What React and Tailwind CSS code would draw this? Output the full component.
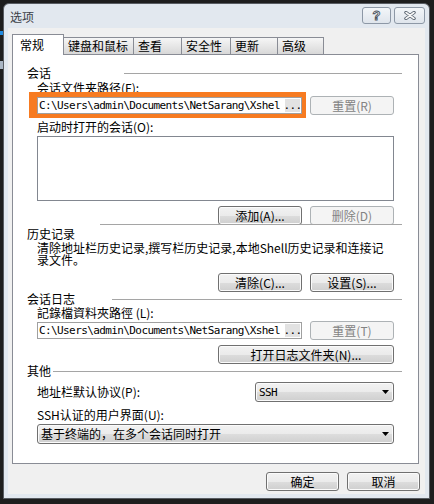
import React from "react";

const btnFace =
  "border-[#707070] bg-[linear-gradient(#f2f2f2,#ebebeb_50%,#dddddd_50%,#cfcfcf)] shadow-[inset_0_0_0_1px_#fbfbfb] text-black";
const btnOff = "border-[#adb2b5] bg-[#f4f4f4] text-[#838383]";
const mono = "font-['DejaVu_Sans_Mono',monospace] text-[11px] tracking-[-0.6px]";

const Btn = ({ children, w = "w-[84px]", disabled }) => (
  <div
    className={`${w} h-[19px] shrink-0 flex items-center justify-center rounded-[3px] border ${
      disabled ? btnOff : btnFace
    }`}
  >
    {children}
  </div>
);

const Heading = ({ title, line, mt, shift = "" }) => (
  <div className={`flex items-center h-[12px] pl-[14px] pr-[16px] ${mt}`}>
    <span className="whitespace-nowrap">{title}</span>
    <div className={`ml-auto h-px bg-[#a5a5a5] ${line} ${shift}`} />
  </div>
);

const Label = ({ children, mt }) => (
  <div className={`h-[12px] flex items-center pl-[24px] whitespace-nowrap ${mt}`}>
    {children}
  </div>
);

// path field: text stops at "Xshel", then the "..." cell
const PathInput = ({ marked }) => (
  <div className="relative w-[265px] h-[17px] shrink-0">
    {marked && (
      <span className="absolute -left-[8px] -right-[4px] -top-[5px] -bottom-[4px] bg-[#f77b21]" />
    )}
    <div className="relative h-full border border-[#a0a0a0] bg-white flex items-center">
      <span className={`flex-1 whitespace-nowrap pl-[1px] leading-[15px] ${mono}`}>
        {"C:\\Users\\admin\\Documents\\NetSarang\\Xshel"}
      </span>
      <span
        className={`h-[13px] w-[15px] mr-[1px] bg-[#e2e2e2] flex items-center justify-center leading-[13px] ${mono}`}
      >
        ...
      </span>
    </div>
  </div>
);

const Select = ({ w, children }) => (
  <div
    className={`${w} h-[20px] shrink-0 rounded-[3px] border ${btnFace} flex items-center pl-[3px] pr-[4px]`}
  >
    <span className="flex-1 whitespace-nowrap">{children}</span>
    <svg width="7" height="4" viewBox="0 0 7 4">
      <path d="M0 0h7L3.5 4z" fill="#000" />
    </svg>
  </div>
);

const Row = ({ children, mt, className = "" }) => (
  <div className={`flex items-center pl-[24px] pr-[24px] ${mt} ${className}`}>{children}</div>
);

const tabs = [
  { name: "键盘和鼠标", w: "w-[71px]" },
  { name: "查看", w: "w-[49px]" },
  { name: "安全性", w: "w-[50px]" },
  { name: "更新", w: "w-[48px]" },
  { name: "高级", w: "w-[47px]" },
];

export default function App() {
  return (
    <div className="w-[434px] h-[504px] bg-[#1e1e1e] flex overflow-hidden font-['Noto_Sans_CJK_SC',sans-serif] text-[12px] leading-[12px] text-black">
      {/* bits of the desktop behind the dialog */}
      <div className="w-[3px] shrink-0 flex flex-col">
        <div className="mt-[31px] h-[4px] bg-[#1f8ae0]" />
        <div className="mt-[26px] h-[8px] bg-[#aab6c4]" />
      </div>

      <div className="mt-[3px] w-[427px] h-[496px] shrink-0 flex flex-col rounded-t-[6px] border border-[#585c62] bg-[#e2e8ef]">
        {/* title bar */}
        <div className="h-[24px] flex items-start pl-[6px] pr-[4px]">
          <span className="mt-[6px] text-[12px] leading-[13px] text-[#3c4148]">选项</span>
          <div className="ml-auto mt-[3px] flex gap-[3px]">
            <div className="w-[29px] h-[17px] rounded-[3px] border border-[#8d98a6] bg-linear-to-b from-[#f3f6f9] to-[#dfe5ec] flex items-center justify-center">
              <span className="font-['Liberation_Sans',sans-serif] font-bold text-[13px] leading-[13px] text-[#f7f7f7] [-webkit-text-stroke:0.9px_#4b5561]">
                ?
              </span>
            </div>
            <div className="w-[31px] h-[17px] rounded-[3px] border border-[#8d98a6] bg-linear-to-b from-[#f3f6f9] to-[#dfe5ec] flex items-center justify-center">
              <svg width="12" height="9" viewBox="0 0 12 9">
                <path d="M2 1.5l8 6M10 1.5l-8 6" stroke="#55606c" strokeWidth="3.4" strokeLinecap="round" />
                <path d="M2 1.5l8 6M10 1.5l-8 6" stroke="#f7f7f7" strokeWidth="1.6" strokeLinecap="round" />
              </svg>
            </div>
          </div>
        </div>

        {/* client area */}
        <div className="mx-[4px] h-[466px] bg-[#f0f0f0] flex flex-col">
          {/* tabs */}
          <div className="mt-[6px] ml-[4px] h-[21px] flex items-end relative z-10">
            <div className="w-[52px] h-[21px] bg-white border border-b-0 border-[#898c95] pl-[7px] pt-[4px]">
              常规
            </div>
            {tabs.map((t) => (
              <div
                key={t.name}
                className={`${t.w} -ml-px h-[18px] border border-[#898c95] bg-linear-to-b from-[#f6f6f6] to-[#d8d8d8] pl-[4px] flex items-center whitespace-nowrap`}
              >
                {t.name}
              </div>
            ))}
          </div>

          {/* panel */}
          <div className="-mt-px ml-[4px] w-[407px] h-[410px] border border-[#898c95] bg-white flex flex-col">
            <Heading title="会话" line="w-[278px]" mt="mt-[12px]" />
            <Label mt="mt-[3px]">会话文件夹路径(F):</Label>
            <Row mt="mt-[2px]" className="h-[19px] justify-between">
              <PathInput marked />
              <Btn disabled>重置(R)</Btn>
            </Row>
            <Label mt="mt-[6px]">启动时打开的会话(O):</Label>
            <div className="mt-[3px] ml-[24px] w-[357px] h-[65px] border border-[#828790] bg-white" />
            <Row mt="mt-[5px]" className="justify-end gap-[8px]">
              <Btn>添加(A)...</Btn>
              <Btn disabled>删除(D)</Btn>
            </Row>

            <Heading title="历史记录" line="w-[302px]" mt="mt-[3px]" shift="-translate-y-[10px]" />
            <div className="mt-[2px] pl-[24px] whitespace-nowrap leading-[12px]">
              清除地址栏历史记录,撰写栏历史记录,本地Shell历史记录和连接记
              <br />
              录文件。
            </div>
            <Row mt="mt-[7px]" className="justify-end gap-[8px]">
              <Btn>清除(C)...</Btn>
              <Btn>设置(S)...</Btn>
            </Row>

            <Heading title="会话日志" line="w-[290px]" mt="mt-[1px]" />
            <Label mt="mt-[2px]">記錄檔資料夾路徑 (L):</Label>
            <Row mt="mt-[2px]" className="h-[19px] justify-between">
              <PathInput />
              <Btn disabled>重置(T)</Btn>
            </Row>
            <Row mt="mt-[5px]" className="justify-end">
              <Btn w="w-[176px]">打开日志文件夹(N)...</Btn>
            </Row>

            <Heading title="其他" line="w-[349px]" mt="mt-[1px]" />
            <Row mt="mt-[5px]" className="justify-between">
              <span className="whitespace-nowrap">地址栏默认协议(P):</span>
              <Select w="w-[139px]">
                <span className={mono}>SSH</span>
              </Select>
            </Row>
            <Label mt="mt-[7px]">SSH认证的用户界面(U):</Label>
            <Row mt="mt-[3px]">
              <Select w="w-[357px]">基于终端的，在多个会话同时打开</Select>
            </Row>
          </div>

          {/* dialog buttons */}
          <div className="mt-[8px] pr-[5px] flex justify-end gap-[8px]">
            <Btn w="w-[73px]">确定</Btn>
            <Btn w="w-[73px]">取消</Btn>
          </div>
        </div>
      </div>
    </div>
  );
}
